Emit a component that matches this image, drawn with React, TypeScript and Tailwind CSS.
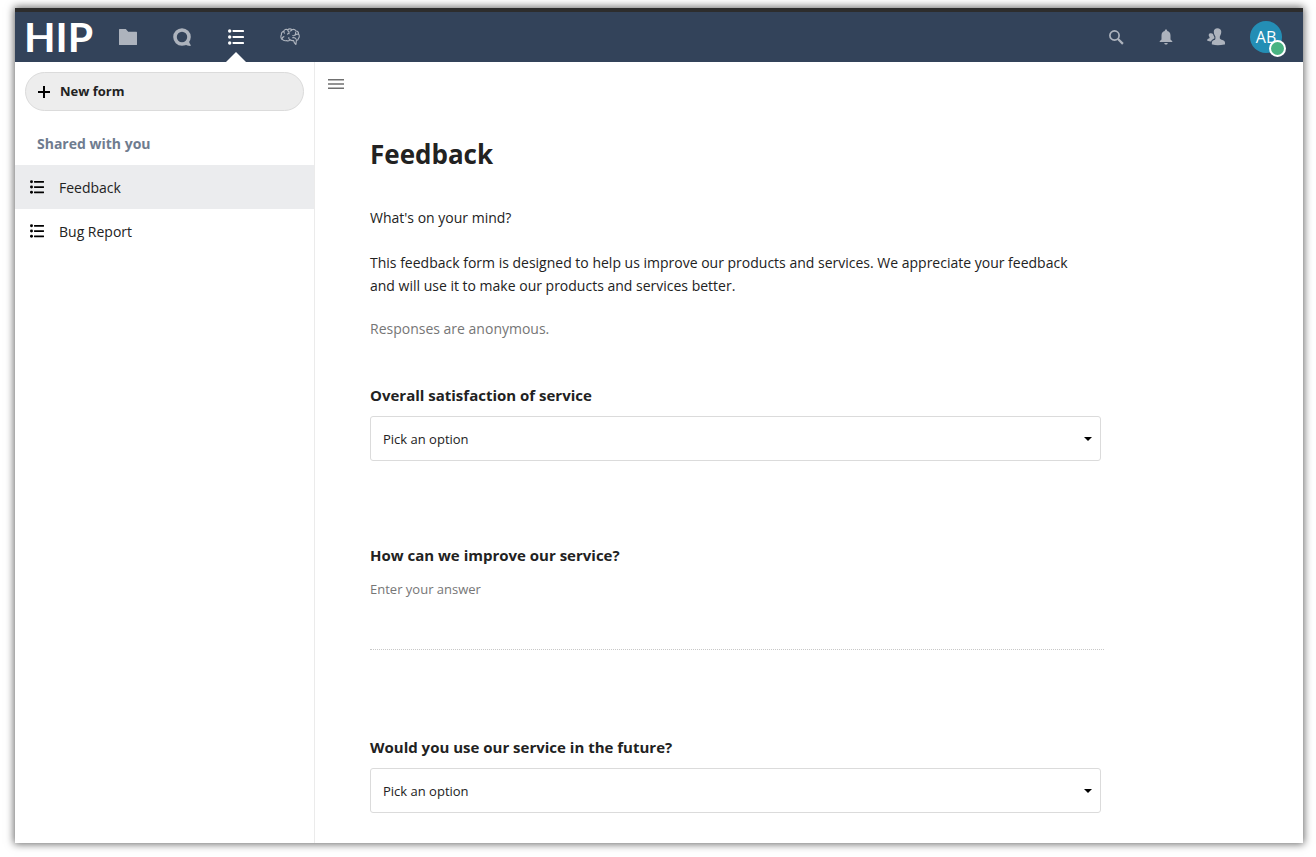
import type { ReactNode } from "react";

function ListIcon({ className }: { className: string }) {
  return (
    <svg viewBox="0 0 16 16" className={className} fill="currentColor" aria-hidden="true">
      <circle cx="1.7" cy="2" r="1.7" />
      <circle cx="1.7" cy="8" r="1.7" />
      <circle cx="1.7" cy="14" r="1.7" />
      <rect x="4.6" y="1" width="11.4" height="2" rx=".4" />
      <rect x="4.6" y="7" width="11.4" height="2" rx=".4" />
      <rect x="4.6" y="13" width="11.4" height="2" rx=".4" />
    </svg>
  );
}

function FolderIcon() {
  return (
    <svg viewBox="0 0 18 16" className="h-4 w-[18px]" fill="currentColor" aria-hidden="true">
      <path d="M.6 0h6.200l2.400 2.800h8.200c.4 0 .6.200.6.6v12c0 .4-.2.6-.6.6H.6c-.4 0-.6-.2-.6-.6V.6C0 .2.200 0 .6 0z" />
    </svg>
  );
}

function TalkIcon() {
  return (
    <svg viewBox="0 0 18 18" className="size-[18px]" aria-hidden="true">
      <circle cx="9" cy="9" r="7" fill="none" stroke="currentColor" strokeWidth="3.6" />
      <path d="M15.800 11.500c.1 2.300.7 4 1.900 5.500.3.500 0 .9-.6.900-1.900 0-3.700-.5-5-1.400z" fill="currentColor" />
    </svg>
  );
}

function BrainIcon() {
  return (
    <svg
      viewBox="0 0 20 18"
      className="h-[18px] w-5"
      fill="none"
      stroke="currentColor"
      strokeWidth="1.1"
      strokeLinecap="round"
      strokeLinejoin="round"
      aria-hidden="true"
    >
      <path d="M7.800 1.900C6.300.8 4 1.500 3.800 3.400 2 3.700 1.100 5.200 1.500 6.600.5 8 .8 10.300 2 11.200c1.200 1.300 2.800 1.900 4.400 1.300 1.300.7 2.700.3 3.500-.7 1.100.8 2.200 1 3.700.8.200 1.400 1 2.700 2.300 3.900l.5-4.100c1.300-.1 2-.8 2-1.900 1.200-1.200 1.200-3.200.1-4.300.2-1.700-.7-3-2.300-3.200C15.200 1.700 13.300 1 11.900 1.700 10.600.5 8.800.6 7.800 1.900z" />
      <path d="M7.800 1.900c0 1 .4 1.500 1.200 1.800M9 3.700v2.100M9 5c-.8.200-1.200.6-1.400 1.200M11.900 1.700c-.3.700-.8 1.100-1.500 1.300M3.800 3.400c0 .8.200 1.300.7 1.700M2 11.200c0-1.400.6-2.300 1.900-2.600M9.900 11.800c-.9-.5-1.300-1.200-1.100-2.200M18.500 6.200c-1.500-.3-2.700.1-3.700 1.200-.6.400-1.300.4-2 .1M15.700 4.100c.1 1-.2 1.900-.9 3.100M12.600 9.800c1.600-.4 2.800.1 3.600 1.500" />
    </svg>
  );
}

function SearchIcon() {
  return (
    <svg viewBox="0 0 15 15" className="size-[15px]" fill="none" stroke="currentColor" aria-hidden="true">
      <circle cx="5.500" cy="5.500" r="4.600" strokeWidth="1.700" />
      <path d="M9 9l4.900 4.900" strokeWidth="2.200" />
    </svg>
  );
}

function BellIcon() {
  return (
    <svg viewBox="0 0 14 16" className="h-4 w-3.5" fill="currentColor" aria-hidden="true">
      <path d="M7 .4c-.8 0-1.200.5-1.200 1.200v.5C3.700 2.600 2.500 4.300 2.500 6.500v4L.7 12.200v.9h12.600v-.9l-1.800-1.700v-4c0-2.200-1.200-3.900-3.300-4.400v-.5C8.200.900 7.800.4 7 .4zM5.300 14h3.400c0 .9-.8 1.600-1.700 1.600S5.300 14.900 5.300 14z" />
    </svg>
  );
}

function ContactsIcon() {
  return (
    <svg viewBox="0 0 18 18" className="size-[18px]" fill="currentColor" aria-hidden="true">
      <path d="M10.400.2c2.300 0 3.900 1.300 3.900 3.600 0 1.400-.4 2.700-1 3.700-.4.600-.5.9-.5 1.500v1.200c.1.900 1.300 1.300 2.700 1.800 1.600.5 2.400 1.300 2.500 2.500l.1 1.300c0 .4-.3.600-.7.700-4.200 1-8.800 1-12 .1-.5-.1-.7-.4-.6-.9.100-2.500.7-3.200 2.400-3.700.700-.2 1.200-.8 1.200-1.600V9c0-.6-.2-1-.600-1.600-.7-1.100-1-2.200-1-3.600C6.800 1.500 8.200.2 10.400.2z" />
      <path d="M3.900 5.200c1 0 1.700.3 2.100.9.300 1.200.7 2 1.400 2.800v1.500c-1.600.8-3 1.300-3.300 3-1.400-.1-2.600-.3-3.600-.6-.3-.1-.400-.3-.3-.6.2-1.100.6-1.300 1.600-1.600.6-.2.900-.5.800-1.100 0-.4-.200-.6-.4-1C1.400 7.400 1.400 5.200 3.900 5.200z" />
    </svg>
  );
}

function NavLink({ label, active, children }: { label: string; active?: boolean; children: ReactNode }) {
  return (
    <a
      href="#"
      aria-label={label}
      aria-current={active ? "page" : undefined}
      className={`relative flex h-full w-[54px] items-center justify-center ${active ? "text-white" : "text-[#adb3bd]"}`}
    >
      {children}
      {active && (
        <span className="absolute bottom-0 left-1/2 -translate-x-1/2 border-x-10 border-b-10 border-x-transparent border-b-white" />
      )}
    </a>
  );
}

function HeaderButton({ label, children }: { label: string; children: ReactNode }) {
  return (
    <button type="button" aria-label={label} className="flex h-full w-[50px] items-center justify-center text-[#adb3bd]">
      {children}
    </button>
  );
}

function FormLink({ title, active }: { title: string; active?: boolean }) {
  return (
    <li>
      <a
        href="#"
        aria-current={active ? "page" : undefined}
        className={`flex h-11 items-center gap-[15px] pl-[15px] text-[14px] ${active ? "bg-[#ebecee]" : ""}`}
      >
        <ListIcon className="size-[14px] text-black" />
        {title}
      </a>
    </li>
  );
}

function SelectQuestion({ id, label, options }: { id: string; label: string; options: string[] }) {
  return (
    <div className="max-w-[731px]">
      <label htmlFor={id} className="block text-[15px] leading-6 font-bold">
        {label}
      </label>
      <div className="relative mt-[9px]">
        <select
          id={id}
          defaultValue=""
          className="block h-[45px] w-full appearance-none rounded-[3px] border border-[#dbdbdb] bg-white px-3 pt-[2px] text-[13px]"
        >
          <option value="">Pick an option</option>
          {options.map((option) => (
            <option key={option}>{option}</option>
          ))}
        </select>
        <svg viewBox="0 0 8 4" className="pointer-events-none absolute top-[21px] right-[9px] h-1 w-2" aria-hidden="true">
          <path d="M0 0h8L4 4z" />
        </svg>
      </div>
    </div>
  );
}

export default function App() {
  return (
    <div className="flex min-h-screen bg-white pt-2 pr-[13px] pb-[14px] pl-[15px] font-['Open_Sans','Noto_Sans',sans-serif] text-[#222]">
      <div className="flex min-w-0 flex-1 flex-col bg-white shadow-[0_0_8px_1px_rgba(0,0,0,0.6)]">
        <header className="flex h-[54px] items-center justify-between border-t-4 border-[#2d2d2d] bg-[#33435a] pr-3 pl-[9px]">
          <div className="flex h-full items-center">
            <a href="#" className="w-[77px] font-['Lato','Open_Sans',sans-serif] text-[41px] leading-[50px] font-bold text-white">
              HIP
            </a>
            <nav aria-label="Apps" className="flex h-full">
              <NavLink label="Files">
                <FolderIcon />
              </NavLink>
              <NavLink label="Talk">
                <TalkIcon />
              </NavLink>
              <NavLink label="Forms" active>
                <ListIcon className="size-4" />
              </NavLink>
              <NavLink label="Brain">
                <BrainIcon />
              </NavLink>
            </nav>
          </div>
          <div className="flex h-full">
            <HeaderButton label="Search">
              <SearchIcon />
            </HeaderButton>
            <HeaderButton label="Notifications">
              <BellIcon />
            </HeaderButton>
            <HeaderButton label="Contacts">
              <ContactsIcon />
            </HeaderButton>
            <HeaderButton label="Account">
              <span className="relative flex size-8 items-center justify-center rounded-full bg-[#248eb5] text-[16px] text-white">
                AB
                <span className="absolute -right-1 -bottom-1 size-[17px] rounded-full border-2 border-white bg-[#49b382]" />
              </span>
            </HeaderButton>
          </div>
        </header>

        <div className="flex flex-1">
          <aside className="w-[300px] shrink-0 border-r border-[#ebebeb]">
            <div className="px-[10px] pt-[10px]">
              <button
                type="button"
                className="flex h-[39px] w-full items-center gap-[10px] rounded-full border border-[#dbdbdb] bg-[#ededed] pl-3 text-[13px] font-bold"
              >
                <svg viewBox="0 0 12 12" className="size-3 text-black" fill="none" stroke="currentColor" strokeWidth="2" aria-hidden="true">
                  <path d="M6 0v12M0 6h12" />
                </svg>
                New form
              </button>
            </div>
            <h2 className="flex h-[54px] items-center pt-[10px] pl-[22px] text-[14px] font-bold text-[#6f7c8f]">Shared with you</h2>
            <ul>
              <FormLink title="Feedback" active />
              <FormLink title="Bug Report" />
            </ul>
          </aside>

          <main className="min-w-0 flex-1">
            <button type="button" aria-label="Toggle navigation" className="flex h-11 w-[42px] items-center justify-center">
              <svg viewBox="0 0 16 10" className="h-[10px] w-4 text-[#707070]" fill="currentColor" aria-hidden="true">
                <path d="M0 0h16v1.500H0zM0 4.300h16v1.500H0zM0 8.500h16v1.500H0z" />
              </svg>
            </button>
            <form className="ml-[55px] max-w-[734px] pt-7 pb-[30px]">
              <h1 className="text-[26px] leading-10 font-bold">Feedback</h1>
              <div className="mt-8 max-w-[720px] text-[14px] leading-[23px]">
                <p>What's on your mind?</p>
                <p className="mt-[22px]">
                  This feedback form is designed to help us improve our products and services. We appreciate your feedback
                  and will use it to make our products and services better.
                </p>
                <p className="mt-5 text-[#767676]">Responses are anonymous.</p>
              </div>
              <div className="mt-[43px] flex flex-col gap-[82px]">
                <SelectQuestion id="satisfaction" label="Overall satisfaction of service" options={["Satisfied", "Unsatisfied"]} />
                <div className="pb-[3px]">
                  <label htmlFor="improve" className="block text-[15px] leading-6 font-bold">
                    How can we improve our service?
                  </label>
                  <textarea
                    id="improve"
                    placeholder="Enter your answer"
                    className="block h-[83px] w-full resize-none border-b border-dotted border-[#c8c8c8] pt-3 text-[13px] leading-5 placeholder:text-[#767676]"
                  />
                </div>
                <SelectQuestion id="future" label="Would you use our service in the future?" options={["Yes", "No"]} />
              </div>
            </form>
          </main>
        </div>
      </div>
    </div>
  );
}
